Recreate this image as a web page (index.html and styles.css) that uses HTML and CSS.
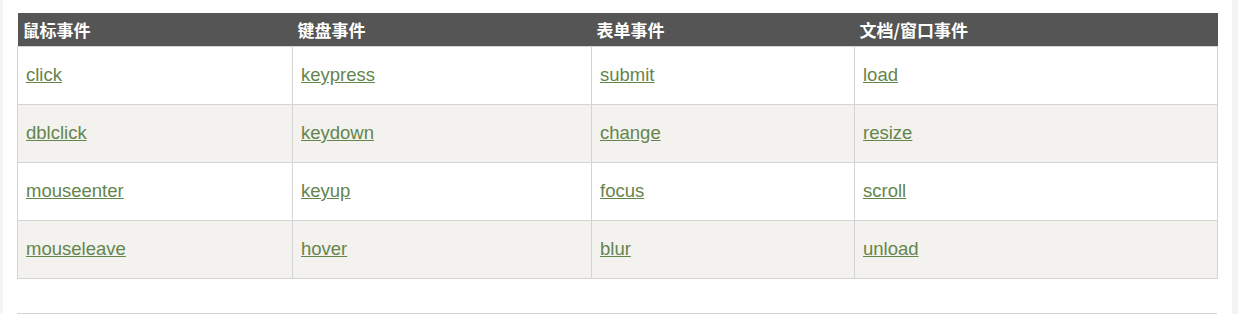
FILE: index.html
```html
<!DOCTYPE html>
<html lang="zh-CN">
<head>
<meta charset="utf-8">
<title>事件</title>
<link rel="stylesheet" href="styles.css">
</head>
<body>
<div class="page">
  <div class="content">
    <table class="events">
      <thead>
        <tr>
          <th class="c1">鼠标事件</th>
          <th class="c2">键盘事件</th>
          <th class="c3">表单事件</th>
          <th class="c4">文档/窗口事件</th>
        </tr>
      </thead>
      <tbody>
        <tr>
          <td><a href="#">click</a></td>
          <td><a href="#">keypress</a></td>
          <td><a href="#">submit</a></td>
          <td><a href="#">load</a></td>
        </tr>
        <tr class="alt">
          <td><a href="#">dblclick</a></td>
          <td><a href="#">keydown</a></td>
          <td><a href="#">change</a></td>
          <td><a href="#">resize</a></td>
        </tr>
        <tr>
          <td><a href="#">mouseenter</a></td>
          <td><a href="#">keyup</a></td>
          <td><a href="#">focus</a></td>
          <td><a href="#">scroll</a></td>
        </tr>
        <tr class="alt">
          <td><a href="#">mouseleave</a></td>
          <td><a href="#">hover</a></td>
          <td><a href="#">blur</a></td>
          <td><a href="#">unload</a></td>
        </tr>
      </tbody>
    </table>
    <hr class="rule">
  </div>
</div>
</body>
</html>
```
FILE: styles.css
```css
html, body {
  margin: 0;
  padding: 0;
  background: #f4f4f4;
}
.page {
  display: flex;
  padding-left: 3px;
}
.content {
  width: 1229px;
  background: #ffffff;
  padding: 13px 15px 0 14px;
  box-sizing: border-box;
  height: 314px;
}
.events {
  width: 1200px;
  border-collapse: collapse;
  table-layout: fixed;
  font-family: "Liberation Sans", Arial, sans-serif;
}
.events th {
  background: #555555;
  color: #ffffff;
  font-family: "Noto Sans CJK SC", "Microsoft YaHei", sans-serif;
  font-weight: bold;
  font-size: 17px;
  text-align: left;
  height: 33px;
  padding: 0 5px;
  box-sizing: border-box;
  border: none;
  vertical-align: middle;
}
.c1 { width: 275px; }
.c2 { width: 299px; }
.c3 { width: 263px; }
.c4 { width: 363px; }
.events td {
  border: 1px solid #d4d4d4;
  height: 58px;
  padding: 0 8px;
  box-sizing: border-box;
  font-size: 18.5px;
  vertical-align: middle;
}
.events tr.alt td {
  background: #f3f2ee;
}
.events a {
  color: #64854c;
  text-decoration: underline;
}
.rule {
  width: 1200px;
  margin: 34px 0 0 0;
  border: none;
  border-top: 1px solid #d4d4d4;
  height: 0;
}
```
